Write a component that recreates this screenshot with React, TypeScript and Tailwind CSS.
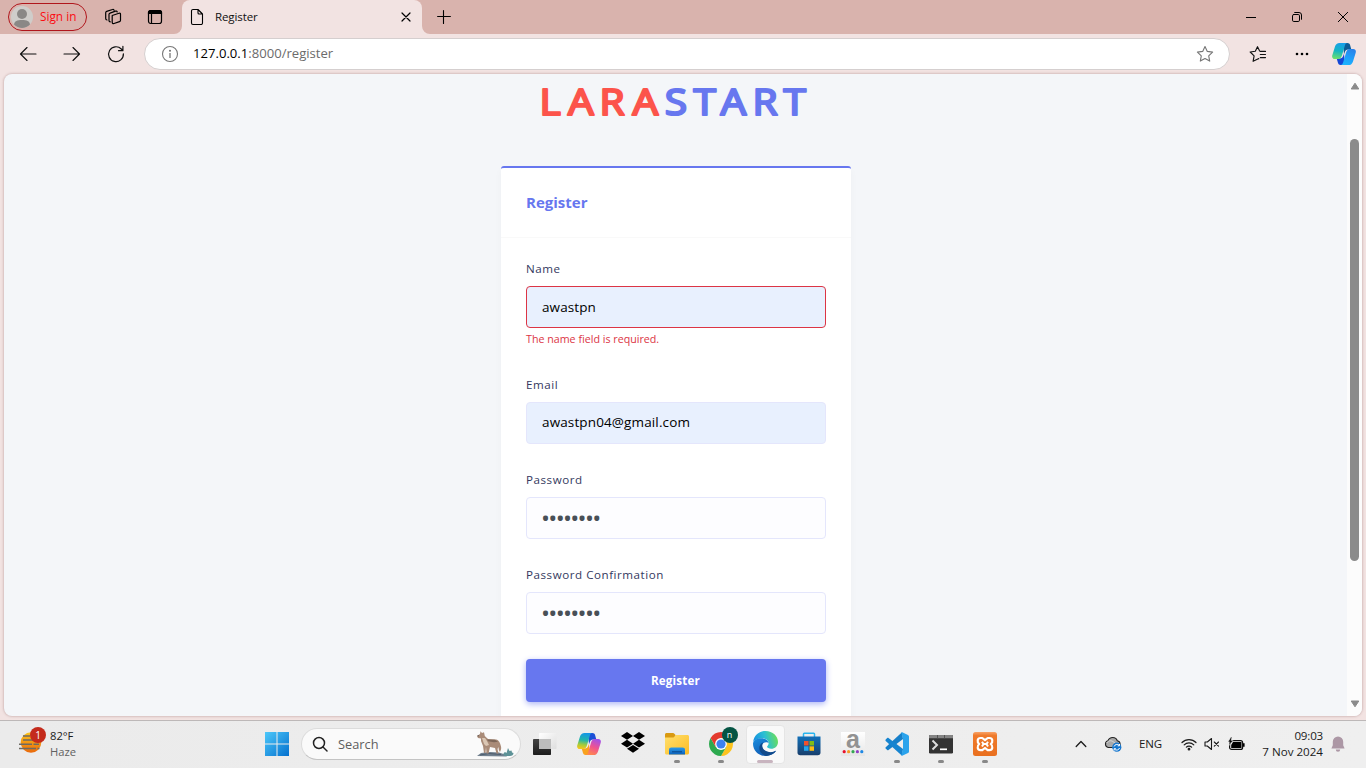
import React from "react";

const ui = "font-['Open_Sans','Noto_Sans',sans-serif]";

function CopilotIcon({ warm = false, className }: { warm?: boolean; className: string }) {
  const id = warm ? "warm" : "cool";
  return (
    <svg viewBox="0 0 24 24" className={className}>
      <defs>
        <linearGradient id={id + "a"} x1="0.5" y1="0" x2="0.35" y2="1">
          {warm ? (
            <>
              <stop offset="0" stopColor="#1596e8" />
              <stop offset="0.45" stopColor="#24b7a8" />
              <stop offset="0.75" stopColor="#a8cc38" />
              <stop offset="1" stopColor="#f5c51c" />
            </>
          ) : (
            <>
              <stop offset="0" stopColor="#1a9fe8" />
              <stop offset="0.5" stopColor="#14b5c4" />
              <stop offset="1" stopColor="#6be06c" />
            </>
          )}
        </linearGradient>
        <linearGradient id={id + "b"} x1="0.7" y1="0" x2="0.3" y2="1">
          {warm ? (
            <>
              <stop offset="0" stopColor="#a350e8" />
              <stop offset="0.5" stopColor="#f0538f" />
              <stop offset="1" stopColor="#ff8a4c" />
            </>
          ) : (
            <>
              <stop offset="0" stopColor="#2a82e8" />
              <stop offset="0.55" stopColor="#1fa0fb" />
              <stop offset="1" stopColor="#1cb4fc" />
            </>
          )}
        </linearGradient>
      </defs>
      <path d="M11 1h4.500c1.300 0 2.100.7 2.500 1.800L19.300 7.500h-3.200c-1.800 0-2.800 1-3.300 2.700l-.8 2z" fill={warm ? "#1c4fd6" : "#0e5c96"} />
      <path d="M13 23H8.500c-1.300 0-2.100-.8-2.500-2l-1.300-4.500h3.200c1.800 0 2.800-1 3.300-2.700l.8-2z" fill={warm ? "#f9a21e" : "#1447d6"} />
      <path d="M7.600 1h7.900c-1.500 0-2.200 1.100-2.700 2.700L10.100 13c-.8 2.900-1.800 4-4.200 4H2.800C.6 17-.3 15.300.3 13.200L3 4.600C3.800 2.200 5.100 1 7.600 1z" fill={`url(#${id}a)`} />
      <path d="M16.400 23H8.500c1.500 0 2.200-1.100 2.700-2.700L13.900 11c.8-2.900 1.800-4 4.200-4h3.100c2.200 0 3.100 1.700 2.500 3.800L21 19.400c-.8 2.400-2.100 3.600-4.600 3.600z" fill={`url(#${id}b)`} />
    </svg>
  );
}

function Stroke({ children, className, viewBox, w = 1 }: { children: React.ReactNode; className: string; viewBox: string; w?: number }) {
  return (
    <svg viewBox={viewBox} className={className} fill="none" stroke="currentColor" strokeWidth={w} strokeLinecap="round" strokeLinejoin="round">
      {children}
    </svg>
  );
}

function TabStrip() {
  return (
    <header className="flex h-[34px] shrink-0 items-center bg-[#d9b3ad]">
      <div className="ml-2 flex h-[28px] w-[79px] items-center rounded-full border border-[#b0161c] pl-[2px]">
        <svg viewBox="0 0 22 22" className="size-[22px]">
          <circle cx="11" cy="11" r="11" fill="#cfcdca" />
          <circle cx="11" cy="8" r="5" fill="#8a8886" />
          <path d="M3 18.500c.6-3.400 3-4.500 8-4.500s7.400 1.100 8 4.500A11 11 0 0 1 11 22a11 11 0 0 1-8-3.500z" fill="#8a8886" />
        </svg>
        <span className={`${ui} ml-[7px] text-[11.8px] text-[#fb0b12]`}>Sign in</span>
      </div>
      <Stroke viewBox="0 0 18 18" className="ml-[17px] size-[18px]" w={1.200}>
        <path d="M8.200 7.500l6.800-2.300c.9-.3 1.500.2 1.500 1v6c0 .7-.4 1.200-1 1.400l-5.500 1.900c-1 .3-1.800-.2-1.800-1.200z" />
        <path d="M6.300 13.800c-.9 0-1.300-.6-1.300-1.400V6.500c0-.7.4-1.200 1-1.400l5.500-2c.8-.3 1.500.1 1.700.9" />
        <path d="M3 12c-.9 0-1.300-.6-1.300-1.400V4.800c0-.7.4-1.200 1-1.400L8.500 1.500c.8-.3 1.400.1 1.600.8" />
      </Stroke>
      <Stroke viewBox="0 0 16 16" className="ml-[25px] size-4" w={1.200}>
        <rect x="1.500" y="1.500" width="13" height="13" rx="2.200" />
        <path d="M1.500 4.500V3.500a2 2 0 0 1 2-2h9a2 2 0 0 1 2 2v1z" fill="currentColor" />
        <path d="M4.500 5v9.500" />
      </Stroke>
      <div className="relative ml-[19px] flex h-[34px] w-[240px] items-center rounded-t-lg bg-[#f2e3e2]">
        <svg viewBox="0 0 8 8" className="absolute bottom-0 -left-2 size-2"><path d="M8 0v8H0a8 8 0 0 0 8-8z" fill="#f2e3e2" /></svg>
        <svg viewBox="0 0 8 8" className="absolute -right-2 bottom-0 size-2"><path d="M0 0v8h8a8 8 0 0 1-8-8z" fill="#f2e3e2" /></svg>
        <Stroke viewBox="0 0 14 18" className="ml-[8px] h-[18px] w-[14px]" w={1.100}>
          <path d="M1.500 3A1.500 1.500 0 0 1 3 1.500h5L12.500 6v9a1.500 1.500 0 0 1-1.500 1.500H3A1.500 1.500 0 0 1 1.500 15zM8 1.500V5a1 1 0 0 0 1 1h3.500" />
        </Stroke>
        <span className={`${ui} ml-[11px] text-[11.500px] tracking-[-0.1px] text-[#111]`}>Register</span>
        <Stroke viewBox="0 0 10 10" className="mr-[11px] ml-auto size-[10px] text-black" w={1.200}>
          <path d="M1 1l8 8M9 1L1 9" />
        </Stroke>
      </div>
      <Stroke viewBox="0 0 14 14" className="ml-[15px] size-[14px] text-black" w={1.100}>
        <path d="M6.500 .6v12.800M.6 6.500h12.800" />
      </Stroke>
      <div className="ml-auto flex items-center text-black">
        <svg viewBox="0 0 10 10" className="mr-[36px] size-[10px]"><path d="M0 5.500h10" stroke="#000" strokeWidth="1" /></svg>
        <Stroke viewBox="0 0 10 10" className="mr-[36px] size-[10px]">
          <rect x=".5" y="2.500" width="7" height="7" rx="1.300" />
          <path d="M2.700.5h4.300a2.500 2.500 0 0 1 2.500 2.500v4.300" />
        </Stroke>
        <Stroke viewBox="0 0 10 10" className="mr-[18px] size-[10px]"><path d="M.3.300l9.400 9.400M9.700.300L.3 9.700" /></Stroke>
      </div>
    </header>
  );
}

function Toolbar() {
  return (
    <div className="flex h-[39px] shrink-0 items-center bg-[#f2e3e2] text-[#111]">
      <Stroke viewBox="0 0 18 18" className="ml-[19px] size-[18px]" w={1.150}><path d="M17 9H1.500M8 2.500L1.500 9 8 15.500" /></Stroke>
      <Stroke viewBox="0 0 18 18" className="ml-[26px] size-[18px]" w={1.150}><path d="M1 9h15.500M10 2.500L16.500 9 10 15.500" /></Stroke>
      <Stroke viewBox="0 0 18 18" className="ml-[26px] size-[18px]" w={1.200}><path d="M16.400 8.800A7.400 7.400 0 1 1 14.300 4L15.800 5.500M15.900 1.300v4.400h-4.400" /></Stroke>
      <div className="ml-[19px] flex h-[32px] w-[1086px] items-center rounded-full border border-[#d5cfcf] bg-white">
        <svg viewBox="0 0 18 18" className="ml-4 size-[18px]" fill="none" stroke="#777" strokeWidth="1.100">
          <circle cx="9" cy="9" r="7.500" />
          <path d="M9 8v5" strokeWidth="1.300" /><circle cx="9" cy="5.700" r=".5" fill="#777" />
        </svg>
        <span className={`${ui} ml-[14px] text-[13.1px] text-[#6b6b6b]`}><span className="text-black">127.0.0.1</span>:8000/register</span>
        <Stroke viewBox="0 0 18 18" className="mr-[15px] ml-auto size-[18px] text-[#767676]" w={1.100}>
          <path d="M9 1.500l2.300 4.900 5.300.7-3.900 3.700 1 5.300L9 13.500l-4.700 2.600 1-5.300L1.400 7.100l5.300-.7z" />
        </Stroke>
      </div>
      <Stroke viewBox="0 0 18 18" className="ml-[19px] size-[18px]" w={1.150}>
        <path d="M11 6.400h5.500M11.300 9.500h5.200M11.300 12.600h5.200" />
        <path d="M8.800 14l-4.700 2.300 1-5.500L1.200 7l5.100-.7L8.500 1.700l1.900 3.700M8.800 14l1-.4" />
      </Stroke>
      <svg viewBox="0 0 14 4" className="ml-[28px] h-1 w-[14px]"><circle cx="2" cy="2" r="1.300" /><circle cx="7" cy="2" r="1.300" /><circle cx="12" cy="2" r="1.300" /></svg>
      <CopilotIcon className="mr-[10px] ml-auto size-6" />
    </div>
  );
}

function Label({ children }: { children: React.ReactNode }) {
  return <label className="mb-[5px] flex h-6 items-center text-[11.6px] font-medium tracking-[0.540px] text-[#34395e]">{children}</label>;
}

function Dots() {
  return <span className="text-[24px] leading-[20px] tracking-[-1.7px] text-[#495057]">••••••••</span>;
}

function Logo() {
  return (
    <svg viewBox="0 0 270 60" className="h-[60px] w-[270px] overflow-visible" fontFamily="'Open Sans','Noto Sans',sans-serif" fontSize="37" strokeWidth="2.200" strokeLinejoin="round">
      <text transform="scale(1.1 1)" y="41.200" x="-0.500 25.400 54.100 84 113.500 139.600 164 193.200 221.400">
        <tspan fill="#fc544b" stroke="#fc544b">LARA</tspan><tspan fill="#6777ef" stroke="#6777ef">START</tspan>
      </text>
    </svg>
  );
}

function Page() {
  return (
    <main className="mx-1 flex h-[642px] shrink-0 overflow-hidden rounded-lg bg-[#f4f6f9] shadow-[0_0_2px_1px_rgba(150,110,110,0.3)]">
      <div className="flex flex-1 flex-col items-center overflow-hidden pl-[1px]">
        <div className="mb-[32px] ml-[-3px] h-[60px]"><Logo /></div>
        <section className={`${ui} h-[620px] w-[350px] shrink-0 rounded-[3px] border-t-2 border-[#6777ef] bg-white shadow-[0_4px_8px_rgba(0,0,0,0.03)]`}>
          <div className="flex h-[70px] items-center border-b border-[#f9f9f9] px-[25px]">
            <h4 className="text-[15px] font-bold text-[#6777ef]">Register</h4>
          </div>
          <form className="flex flex-col px-[25px] pt-[19px]">
            <Label>Name</Label>
            <div className="flex h-[42px] items-center rounded-[4px] border border-[#dc3545] bg-[#e8f0fe] px-[15px] text-[13.5px] tracking-[0.1px] text-black">awastpn</div>
            <div className="mb-[23px] flex h-[22px] items-center text-[10.7px] text-[#dc3545]">The name field is required.</div>
            <Label>Email</Label>
            <div className="mb-6 flex h-[42px] items-center rounded-[4px] border border-[#e4e6fc] bg-[#e8f0fe] px-[15px] pb-[1px] text-[13.5px] tracking-[0.130px] text-black">awastpn04@gmail.com</div>
            <Label>Password</Label>
            <div className="mb-6 flex h-[42px] items-center rounded-[4px] border border-[#e4e6fc] bg-[#fdfdff] px-[14px]"><Dots /></div>
            <Label>Password Confirmation</Label>
            <div className="mb-[25px] flex h-[42px] items-center rounded-[4px] border border-[#e4e6fc] bg-[#fdfdff] px-[14px]"><Dots /></div>
            <button type="button" className="h-[43px] rounded-[4px] bg-[#6777ef] pr-[1px] text-[11.6px] font-bold tracking-[0.2px] text-white shadow-[0_2px_6px_#acb5f6]">Register</button>
          </form>
        </section>
      </div>
      <div className="flex w-[15px] flex-col items-center bg-[#fcfcfc]">
        <svg viewBox="0 0 10 8" className="mt-2 h-2 w-[10px]"><path d="M5 1.200L8.800 7H1.200z" fill="#8b8b8b" stroke="#8b8b8b" strokeLinejoin="round" /></svg>
        <div className="mt-[49px] h-[422px] w-[9px] rounded-full bg-[#8b8b8b]" />
        <svg viewBox="0 0 10 8" className="mt-auto mb-2 h-2 w-[10px]"><path d="M5 6.800L8.800 1H1.200z" fill="#8b8b8b" stroke="#8b8b8b" strokeLinejoin="round" /></svg>
      </div>
    </main>
  );
}

function WolfIcon() {
  return (
    <svg viewBox="0 0 38 26" className="h-[26px] w-[38px]">
      <path d="M1 25l4-3 9-1 9 .5 6 2 2 2z" fill="#71808f" />
      <path d="M4 24l9-1.500 12 1" stroke="#4e5d6d" fill="none" />
      <path d="M28 25c-1-2-.5-3 1-4l1.500 1 1.500-5 1.500 3 2-.5.5 2 1.500.5c0 2-1.500 3-3.500 3z" fill="#5e9297" />
      <path d="M1 5l3-2 .5-2.800L6 2l2-.8.8 3.800 3.200 3 8 .5c3 .5 4 3 5 7 .6 2-.3 4-1 5.500-1-1-1.500-3-1.500-5l-1 2 1 4.500h-2L19 17l-5-1-1.500 6.500h-2L10 16l-.5 6H8L7 15 5 10V7.500L2 7z" fill="#a98b78" />
      <path d="M6 7l2 6 2 2 3-1-2-4-2-3z" fill="#dac6b3" />
      <path d="M11 8.500l8 .3 3 2-4 .5-6-1z" fill="#7d6759" />
      <path d="M1 5l1.500-.8.5 1z" fill="#333" />
    </svg>
  );
}

function TaskSlot({ children, mark, active }: { children: React.ReactNode; mark?: boolean; active?: boolean }) {
  return (
    <div className="flex h-[47px] w-11 items-center justify-center">
      <div className={active ? "relative flex h-[39px] w-[39px] items-center justify-center rounded-[4px] border border-[#e5e5e5] bg-[#f9f9f9] pb-[1px]" : "relative flex h-[39px] w-[39px] items-center justify-center pb-[1px]"}>
        {children}
        {mark && <i className="absolute bottom-[1px] h-[3px] w-[6px] rounded-full bg-[#888]" />}
        {active && <i className="absolute bottom-0 h-[3px] w-4 rounded-full bg-[#c8b4bf]" />}
      </div>
    </div>
  );
}

function TaskIcons() {
  return (
    <div className="flex">
      <TaskSlot>
        <svg viewBox="0 0 24 24" className="size-6">
          <defs>
            <linearGradient id="tv" x1="0" y1="0" x2="0" y2="1"><stop stopColor="#444" /><stop offset="1" stopColor="#1c1c1c" /></linearGradient>
            <linearGradient id="tw" x1="0" y1="0" x2="1" y2="1"><stop stopColor="#fff" /><stop offset="1" stopColor="#dedede" /></linearGradient>
          </defs>
          <rect x="0" y="7" width="18" height="16" rx=".8" fill="url(#tv)" />
          <rect x="6" y="1" width="17.500" height="16" rx=".8" fill="url(#tw)" />
          <path d="M6 7h12v10H6z" fill="#bcbcbc" />
        </svg>
      </TaskSlot>
      <TaskSlot><CopilotIcon warm className="size-6" /></TaskSlot>
      <TaskSlot>
        <svg viewBox="0 0 24 21" className="mb-[3px] h-[21px] w-6">
          <path d="M6 0l6 3.900-6 3.900-6-3.900zM18 0l6 3.900-6 3.900-6-3.900zM6 7.800l6 3.900-6 3.900-6-3.900zM18 7.800l6 3.900-6 3.900-6-3.900zM12 12.900l6 3.900-6 3.900-6-3.900z" />
        </svg>
      </TaskSlot>
      <TaskSlot mark>
        <svg viewBox="0 0 24 24" className="size-6">
          <defs>
            <linearGradient id="fy" x1="0" y1="0" x2="1" y2="1"><stop stopColor="#ffe06e" /><stop offset="1" stopColor="#fcbc24" /></linearGradient>
            <linearGradient id="fb" x1="0" y1="0" x2="0" y2="1"><stop stopColor="#2a9be9" /><stop offset="1" stopColor="#0c62bd" /></linearGradient>
          </defs>
          <path d="M0 2.500C0 1.700.7 1 1.500 1H8c.6 0 1 .2 1.400.7L10.500 3v4H0z" fill="#d99a12" />
          <path d="M0 5.500h8.500L11 3h11.500c.8 0 1.500.7 1.500 1.500V21c0 .8-.7 1.500-1.500 1.500h-21C.7 22.500 0 21.800 0 21z" fill="url(#fy)" />
          <path d="M4 22.500v-4.800C4 16.200 5 15.500 6.300 15.500h11.400c1.400 0 2.300.8 2.300 2.200v4.800z" fill="url(#fb)" />
          <path d="M7 19h10v1.500H7z" fill="#0d559e" />
        </svg>
      </TaskSlot>
      <TaskSlot mark>
        <svg viewBox="0 0 24 24" className="size-6">
          <path d="M12 12V6h10.390A12 12 0 0 1 12 24l5.200-9z" fill="#fcc31e" />
          <path d="M12 12l5.200 3L12 24A12 12 0 0 1 1.610 6l5.200 9z" fill="#2da94f" />
          <path d="M1.610 6A12 12 0 0 1 22.390 6H12l-5.200 9z" fill="#e33b2e" />
          <circle cx="12" cy="12" r="5.900" fill="#fff" /><circle cx="12" cy="12" r="4.600" fill="#3c82f0" />
        </svg>
        <span className={`${ui} absolute top-[2px] left-[20px] flex size-4 items-center justify-center rounded-full bg-[#045443] text-[9px] leading-none text-white`}>n</span>
      </TaskSlot>
      <TaskSlot active>
        <svg viewBox="0 0 24 24" className="size-[25px]">
          <defs>
            <linearGradient id="ea" x1="0" y1=".5" x2="1" y2=".3"><stop stopColor="#158fe2" /><stop offset=".5" stopColor="#2cc0d2" /><stop offset="1" stopColor="#6ee052" /></linearGradient>
            <linearGradient id="eb" x1="0" y1="0" x2=".6" y2="1"><stop stopColor="#1b8fe0" /><stop offset="1" stopColor="#1058b0" /></linearGradient>
          </defs>
          <path d="M.2 10.500C.8 4.500 5.800 0 12 0c7 0 12 5 12 10.500 0 4-3 6.500-6.500 6.500-2.300 0-4-.8-4-1.800 0-.8 1.500-1.500 1.500-3.500 0-2.500-2.500-4.800-6-4.800C4.500 6.900 1 9 .2 10.500z" fill="url(#ea)" />
          <path d="M0 12.200C.2 8.800 3.600 6.900 7.800 6.900c3.700 0 7.200 2.100 7.200 4.900-1-1.600-5.800-1.600-6.200 2.200-.4 4 4 7 8.200 6.700 2.300 0 4.300-1.600 5.200-1.700C20.200 22.200 16.400 24 12 24 5.400 24 0 18.700 0 12.200z" fill="url(#eb)" />
          <path d="M8.500 11.500c-3 2-3.200 6.800-.5 9.700 1.500 1.600 3.500 2.500 5 2.700 4-.2 7.300-2.300 9.200-4.900-5.500 3-13.400.6-13.400-5 0-1 .3-2 1.300-2.900z" fill="#114a8b" />
        </svg>
      </TaskSlot>
      <TaskSlot>
        <svg viewBox="0 0 24 24" className="size-6">
          <defs><linearGradient id="st" x1="0" y1="0" x2="0" y2="1"><stop stopColor="#1270b8" /><stop offset="1" stopColor="#183e6c" /></linearGradient></defs>
          <path d="M6.500 6V2c0-.5.3-.8.8-.8h9.400c.5 0 .8.300.8.800V6" fill="none" stroke="#29b5ef" strokeWidth="1.500" />
          <path d="M.5 4.500h23v16c0 1.700-1 2.700-2.700 2.700H3.200c-1.700 0-2.700-1-2.700-2.700z" fill="url(#st)" />
          <path d="M7 4.500h1v-1.500h8v1.500h1" fill="none" />
          <path d="M7 9h4.500v4.500H7z" fill="#f2512c" /><path d="M12.500 9H17v4.500h-4.500z" fill="#80bb16" />
          <path d="M7 14.300h4.500v4.500H7z" fill="#24a5ed" /><path d="M12.500 14.300H17v4.500h-4.500z" fill="#fdba11" />
        </svg>
      </TaskSlot>
      <TaskSlot>
        <svg viewBox="0 0 24 36" className="h-9 w-6">
          <defs><linearGradient id="am" x1="0" y1="0" x2="0" y2="1"><stop stopColor="#fff" /><stop offset="1" stopColor="#e6e6e6" /></linearGradient></defs>
          <path d="M0 6h24v24H0z" fill="url(#am)" />
          <text x="12" y="21.500" textAnchor="middle" fontSize="25" fontWeight="700" fontFamily="Liberation Sans" fill="#929292">a</text>
          <circle cx="3.200" cy="25.700" r="1.600" fill="#e8112d" /><circle cx="7.600" cy="25.700" r="1.600" fill="#f59a25" /><circle cx="12" cy="25.700" r="1.600" fill="#35a853" /><circle cx="16.400" cy="25.700" r="1.600" fill="#9140c4" /><circle cx="20.800" cy="25.700" r="1.600" fill="#1e88e5" />
        </svg>
      </TaskSlot>
      <TaskSlot mark>
        <svg viewBox="0 0 24 24" className="size-6">
          <path d="M17 .2L.7 15.200c-.4.400-.4 1 0 1.400l1.500 1.400c.4.300.9.400 1.300.1L18 7z" fill="#167fc9" />
          <path d="M17 23.800L.7 8.900c-.4-.4-.4-1 0-1.400l1.500-1.400c.4-.3.900-.4 1.300-.1L18 17z" fill="#1684d0" />
          <path d="M17.200.2L23 3c.6.300 1 .9 1 1.500v15c0 .7-.4 1.200-1 1.500l-5.800 2.800c-.6.100-.9-.2-.7-.8L18 17V7l-1.500-6c-.2-.5.2-.9.7-.8z" fill="#2aa3ec" />
        </svg>
      </TaskSlot>
      <TaskSlot mark>
        <svg viewBox="0 0 24 24" className="size-6">
          <rect y="3" width="24" height="18.500" rx="1.200" fill="#333" />
          <path d="M0 6.300V4.200C0 3.500.5 3 1.200 3h21.600c.7 0 1.200.5 1.200 1.200v2.100z" fill="#858585" /><path d="M8.500 3v3.300M15.500 3v3.300" stroke="#555" />
          <path d="M3.500 8.500l4.500 4.500-4.500 4.500" fill="none" stroke="#ddd" strokeWidth="2" /><path d="M11 17.300h7" stroke="#fff" strokeWidth="1.700" />
        </svg>
      </TaskSlot>
      <TaskSlot mark>
        <svg viewBox="0 0 24 24" className="size-6">
          <defs><linearGradient id="xa" x1="0" y1="0" x2="0" y2="1"><stop stopColor="#f9a266" /><stop offset=".15" stopColor="#ef7a2b" /><stop offset="1" stopColor="#e9701f" /></linearGradient></defs>
          <rect width="24" height="24" rx="2.500" fill="url(#xa)" />
          <path d="M7.500 6h1.800L12 8.200 14.700 6h1.800c3.300 0 3.700 4 1.300 6 2.600 2 1.800 6.200-1.300 6.200h-1.800L12 16l-2.700 2.200H7.500c-3.100 0-3.900-4.200-1.300-6.200C3.800 10 4.200 6 7.500 6z" fill="none" stroke="#fff" strokeWidth="2.200" strokeLinejoin="round" />
          <path d="M9 9.700l1.500 2.300L9 14.500M15 9.700L13.500 12l1.500 2.500M10.500 12h3" fill="none" stroke="#fff" strokeWidth="2" strokeLinejoin="round" />
        </svg>
      </TaskSlot>
    </div>
  );
}

function Tray() {
  return (
    <div className={`${ui} ml-auto flex items-center text-[#1b1b1b]`}>
      <Stroke viewBox="0 0 12 8" className="h-2 w-3" w={1.300}><path d="M1.200 6.500L6 1.500l4.800 5" /></Stroke>
      <svg viewBox="0 0 18 16" className="ml-[17px] h-4 w-[18px]">
        <path d="M4.300 11.500A3.500 3.500 0 0 1 4 4.700C4.800 2.500 6.700 1.500 8.700 1.500c2.300 0 4 1.300 4.600 3.300a3.400 3.400 0 0 1 0 6.700z" fill="#a9a9a9" stroke="#222" strokeWidth="1.100" />
        <path d="M2.500 7c2-2.500 4.500-3 7-1l4 3" fill="none" stroke="#ddd" />
        <circle cx="12.800" cy="11.200" r="4.600" fill="#1677cf" />
        <path d="M10.100 10.500a3 3 0 0 1 5-1.200M15.500 8v1.800h-1.800M15.500 12a3 3 0 0 1-5 1.200M10.100 14.500v-1.800h1.800" fill="none" stroke="#fff" />
      </svg>
      <span className="ml-[17px] w-[24px] text-[11.500px] tracking-[-0.1px]">ENG</span>
      <Stroke viewBox="0 0 16 14" className="ml-[18px] h-[14px] w-4" w={1.200}>
        <path d="M1 5.500a9.800 9.800 0 0 1 14 0M3.200 7.900a6.700 6.700 0 0 1 9.600 0M5.400 10.200a3.600 3.600 0 0 1 5.200 0" /><circle cx="8" cy="12.200" r=".8" fill="currentColor" />
      </Stroke>
      <Stroke viewBox="0 0 16 14" className="ml-[7px] h-[14px] w-4" w={1.100}><path d="M1 5h2.300L7.500 1.500v11L3.300 9H1zM10.300 5l4.200 4.200M14.500 5l-4.200 4.200" /></Stroke>
      <svg viewBox="0 0 18 14" className="ml-[8px] h-[14px] w-[18px]">
        <rect x="1.600" y="3.600" width="13" height="8.800" rx="2" fill="none" stroke="#111" strokeWidth="1.200" /><path d="M5 5h8.500v6H3.200V8zM15 6.200h1.600v3.600H15z" />
        <path d="M3 0L0 5h2l-.8 3.500L5 3.500H3L4 0z" stroke="#efefef" strokeWidth=".5" />
      </svg>
      <div className="ml-[9px] flex w-[68px] flex-col items-end text-[11.600px] leading-4 whitespace-nowrap"><span className="tracking-[-0.2px]">09:03</span><span>7 Nov 2024</span></div>
      <svg viewBox="0 0 14 16" className="mr-[21px] ml-[8px] h-4 w-[14px]" fill="#ac97a5"><path d="M7 .5A5.200 5.200 0 0 0 1.800 5.700v3.600L.4 12.500h13.200l-1.400-3.200V5.700A5.200 5.200 0 0 0 7 .5zM4.800 13.500h4.400a2.200 2.200 0 0 1-4.400 0z" /></svg>
    </div>
  );
}

function Taskbar() {
  return (
    <footer className="flex h-12 shrink-0 items-center border-t border-[#bdb8b8] bg-linear-to-r from-[#ebebeb] to-[#efefef] pb-[1px]">
      <div className="relative ml-[19px] flex w-[246px] items-center">
        <svg viewBox="0 0 24 24" className="size-6">
          <defs><linearGradient id="sun" x1="0" y1="0" x2="0" y2="1"><stop stopColor="#fcc51b" /><stop offset="1" stopColor="#e9680c" /></linearGradient></defs>
          <circle cx="12" cy="10.500" r="10.300" fill="url(#sun)" />
          <path d="M4 4h7M4 8h18M0 12.300h13M14.500 12.300H20M0 16.500h17M18.500 16.500h2" stroke="#6e6a62" strokeWidth="1.600" />
        </svg>
        <span className={`${ui} absolute top-[-1px] left-[11px] flex size-4 items-center justify-center rounded-full bg-[#c42b1c] text-[10px] text-white`}>1</span>
        <div className={`${ui} ml-[7px] text-[11.200px] leading-4 text-[#1b1b1b]`}><div>82°F</div><div className="text-[#616161]">Haze</div></div>
      </div>
      <svg viewBox="0 0 24 24" className="size-6">
        <defs><linearGradient id="win" gradientUnits="userSpaceOnUse" x1="0" y1="0" x2="24" y2="24"><stop stopColor="#4cc8fa" /><stop offset="1" stopColor="#0570ce" /></linearGradient></defs>
        <path d="M0 0h11.500v11.500H0zM12.500 0H24v11.500H12.500zM0 12.500h11.500V24H0zM12.500 12.500H24V24H12.500z" fill="url(#win)" />
      </svg>
      <div className="ml-[12px] flex h-8 w-[220px] items-center rounded-full border border-[#dcdcdc] border-b-[#c4c4c4] bg-[#fafafa]">
        <Stroke viewBox="0 0 16 16" className="ml-[10px] size-4 text-[#222]" w={1.500}><circle cx="7" cy="7" r="5.500" /><path d="M11 11l4 4" /></Stroke>
        <span className={`${ui} mt-[1px] ml-[10px] text-[12.800px] text-[#5e5e5e]`}>Search</span>
        <div className="mr-[6px] ml-auto"><WolfIcon /></div>
      </div>
      <div className="ml-[2px]"><TaskIcons /></div>
      <Tray />
    </footer>
  );
}

export default function App() {
  return (
    <div className="flex h-[768px] w-[1366px] flex-col overflow-hidden bg-[#f2e3e2]">
      <TabStrip />
      <Toolbar />
      <div className="flex flex-1 flex-col pt-[1px]"><Page /></div>
      <Taskbar />
    </div>
  );
}
